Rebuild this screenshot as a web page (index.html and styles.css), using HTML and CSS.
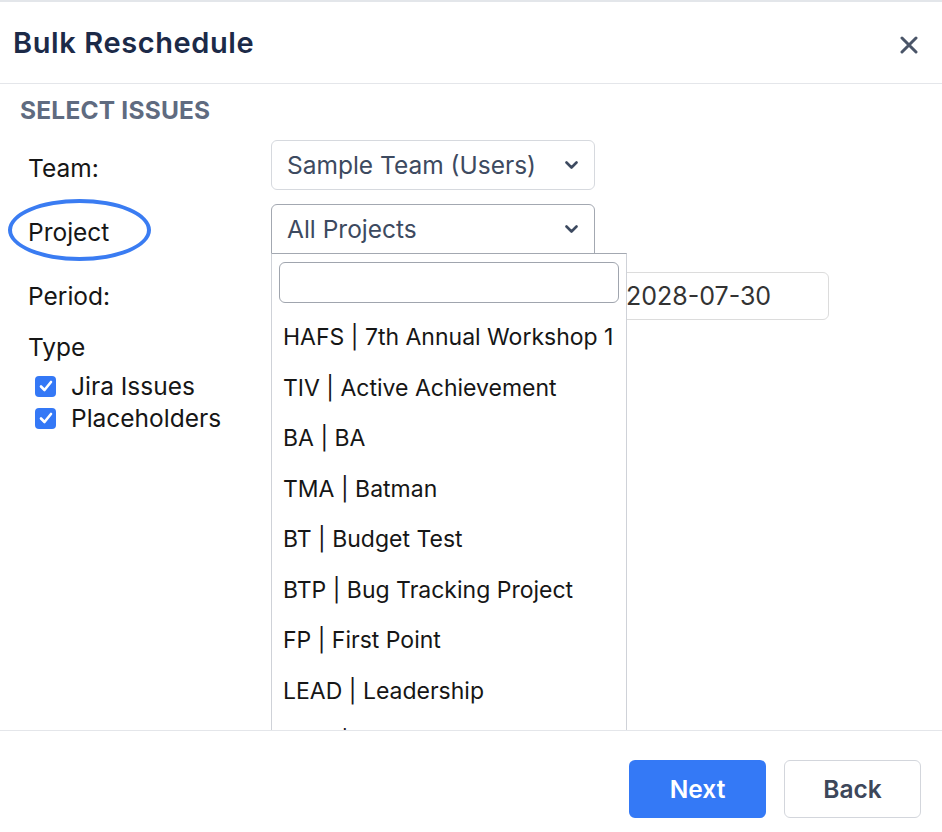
FILE: index.html
```html
<html>
	<head>
	<link rel="stylesheet" href="styles.css">
	</head>
	<body>
		<div class="modal">
			<div class="modal-header">
				<h2>Bulk Reschedule</h2>
				<span class="close">
					<svg width="18" height="18" viewBox="0 0 18 18"><path d="M2 2L16 16M16 2L2 16" stroke="#4a5568" stroke-width="3" stroke-linecap="round"/></svg>
				</span>
			</div>
			<div class="modal-body">
				<h3 class="section-title">SELECT ISSUES</h3>
				<div class="form">
					<div class="form-row">
						<div class="label label-shift">Team:</div>
						<div class="control">
							<div class="select">
								<span>Sample Team (Users)</span>
								<svg width="13" height="8" viewBox="0 0 13 8"><path d="M1.5 1.5L6.5 6.5L11.5 1.5" fill="none" stroke="#3d4a60" stroke-width="2.6" stroke-linecap="round" stroke-linejoin="round"/></svg>
							</div>
						</div>
					</div>
					<div class="form-row row-project">
						<div class="label label-shift">
							Project
							<span class="ring"></span>
						</div>
						<div class="control">
							<div class="select open">
								<span>All Projects</span>
								<svg width="13" height="8" viewBox="0 0 13 8"><path d="M1.5 1.5L6.5 6.5L11.5 1.5" fill="none" stroke="#3d4a60" stroke-width="2.6" stroke-linecap="round" stroke-linejoin="round"/></svg>
							</div>
							<div class="dropdown">
								<div class="search"></div>
								<div class="option">HAFS | 7th Annual Workshop 1</div>
								<div class="option">TIV | Active Achievement</div>
								<div class="option">BA | BA</div>
								<div class="option">TMA | Batman</div>
								<div class="option">BT | Budget Test</div>
								<div class="option">BTP | Bug Tracking Project</div>
								<div class="option">FP | First Point</div>
								<div class="option">LEAD | Leadership</div>
								<div class="option">MAR | Marketing</div>
								<div class="option">OPS | Operations</div>
							</div>
						</div>
					</div>
					<div class="form-row row-period">
						<div class="label">Period:</div>
						<div class="control dates">
							<div class="date date-start">2024-07-30</div>
							<div class="date date-end">2028-07-30</div>
						</div>
					</div>
					<div class="type-block">
						<div class="label">Type</div>
						<div class="check-row">
							<span class="checkbox"><svg width="14" height="12" viewBox="0 0 14 12"><path d="M2 6.5L5.5 10L12 2" fill="none" stroke="#fff" stroke-width="2.6" stroke-linecap="round" stroke-linejoin="round"/></svg></span>
							<span>Jira Issues</span>
						</div>
						<div class="check-row">
							<span class="checkbox"><svg width="14" height="12" viewBox="0 0 14 12"><path d="M2 6.5L5.5 10L12 2" fill="none" stroke="#fff" stroke-width="2.6" stroke-linecap="round" stroke-linejoin="round"/></svg></span>
							<span>Placeholders</span>
						</div>
					</div>
				</div>
			</div>
			<div class="modal-footer">
				<button type="button" class="btn btn-primary">Next</button>
				<button type="button" class="btn btn-default">Back</button>
			</div>
		</div>
	</body>
</html>
```

FILE: styles.css
```css
*{
	margin:0px;
	padding:0px;
	box-sizing: border-box;
}
body{
	font-family: Inter, "Noto Sans", sans-serif;
	background: #ffffff;
	color: #161616;
}
.modal{
	width: 942px;
	height: 832px;
	display: flex;
	flex-direction: column;
	border-top: 2px solid #e3e6ea;
}
.modal-header{
	height: 82px;
	display: flex;
	align-items: center;
	justify-content: space-between;
	padding: 0px 24px 0px 13px;
	border-bottom: 1px solid #e4e6ea;
}
.modal-header h2{
	font-size: 29px;
	font-weight: 600;
	color: #1c2a48;
	letter-spacing: 0.6px;
}
.close{
	display: flex;
	margin-top: 4px;
}
.modal-body{
	flex: 1;
	position: relative;
	overflow: hidden;
	padding: 12px 20px 0px 20px;
}
.section-title{
	font-size: 24.5px;
	line-height: 28px;
	font-weight: 700;
	color: #5f6b80;
	letter-spacing: 0.2px;
}
.form{
	margin-top: 16px;
	padding-left: 8px;
}
.form-row{
	display: flex;
	align-items: center;
}
.row-project{
	margin-top: 14px;
}
.row-period{
	margin-top: 18px;
}
.label{
	width: 243px;
	font-size: 24.5px;
	position: relative;
	color: #161616;
}
.label-shift{
	padding-top: 5px;
}
.control{
	position: relative;
}
.select{
	width: 324px;
	height: 50px;
	border: 1px solid #d6d9de;
	border-radius: 6px;
	display: flex;
	align-items: center;
	justify-content: space-between;
	padding: 0px 16px 0px 15px;
	font-size: 24.5px;
	color: #3d4a60;
}
.select.open{
	border-color: #a3a8b1;
	border-radius: 6px 6px 0px 0px;
}
.ring{
	position: absolute;
	left: -20px;
	top: -13px;
	width: 143px;
	height: 62px;
	border: 4px solid #3a7cf2;
	border-radius: 50%;
}
.dropdown{
	position: absolute;
	top: 49px;
	left: 0px;
	width: 356px;
	background: #ffffff;
	border: 1px solid #cfd2d8;
	border-top: 1px solid #a3a8b1;
	z-index: 5;
	padding-top: 8px;
}
.search{
	height: 41px;
	margin: 0px 7px 9px 7px;
	border: 1px solid #a0a5ae;
	border-radius: 6px;
}
.option{
	height: 50.57px;
	line-height: 50.57px;
	padding-left: 11px;
	font-size: 23px;
	color: #161616;
	white-space: nowrap;
}
.dates{
	display: flex;
	gap: 16px;
}
.date{
	height: 48px;
	border: 1px solid #dcdcdc;
	border-radius: 6px;
	display: flex;
	align-items: center;
	padding-left: 14px;
	font-size: 25px;
	color: #333333;
}
.date-start{
	width: 324px;
}
.date-end{
	width: 218px;
}
.type-block{
	margin-top: 12px;
}
.type-block .label{
	line-height: 30px;
	margin-bottom: 8px;
}
.check-row{
	display: flex;
	align-items: center;
	height: 32px;
	padding-left: 7px;
	font-size: 24.5px;
	color: #161616;
}
.checkbox{
	width: 21px;
	height: 21px;
	border-radius: 4px;
	background: #3478f6;
	display: flex;
	align-items: center;
	justify-content: center;
	margin-right: 15px;
}
.modal-footer{
	height: 102px;
	border-top: 1px solid #e4e6ea;
	display: flex;
	justify-content: flex-end;
	align-items: flex-start;
	gap: 18px;
	padding: 29px 21px 0px 0px;
}
.btn{
	width: 137px;
	height: 58px;
	border-radius: 6px;
	font-family: Inter, "Noto Sans", sans-serif;
	font-size: 24.5px;
	font-weight: 600;
}
.btn-primary{
	background: #3479f6;
	color: #ffffff;
	border: none;
}
.btn-default{
	background: #ffffff;
	color: #3d475a;
	border: 1px solid #d3d6dc;
}
```
